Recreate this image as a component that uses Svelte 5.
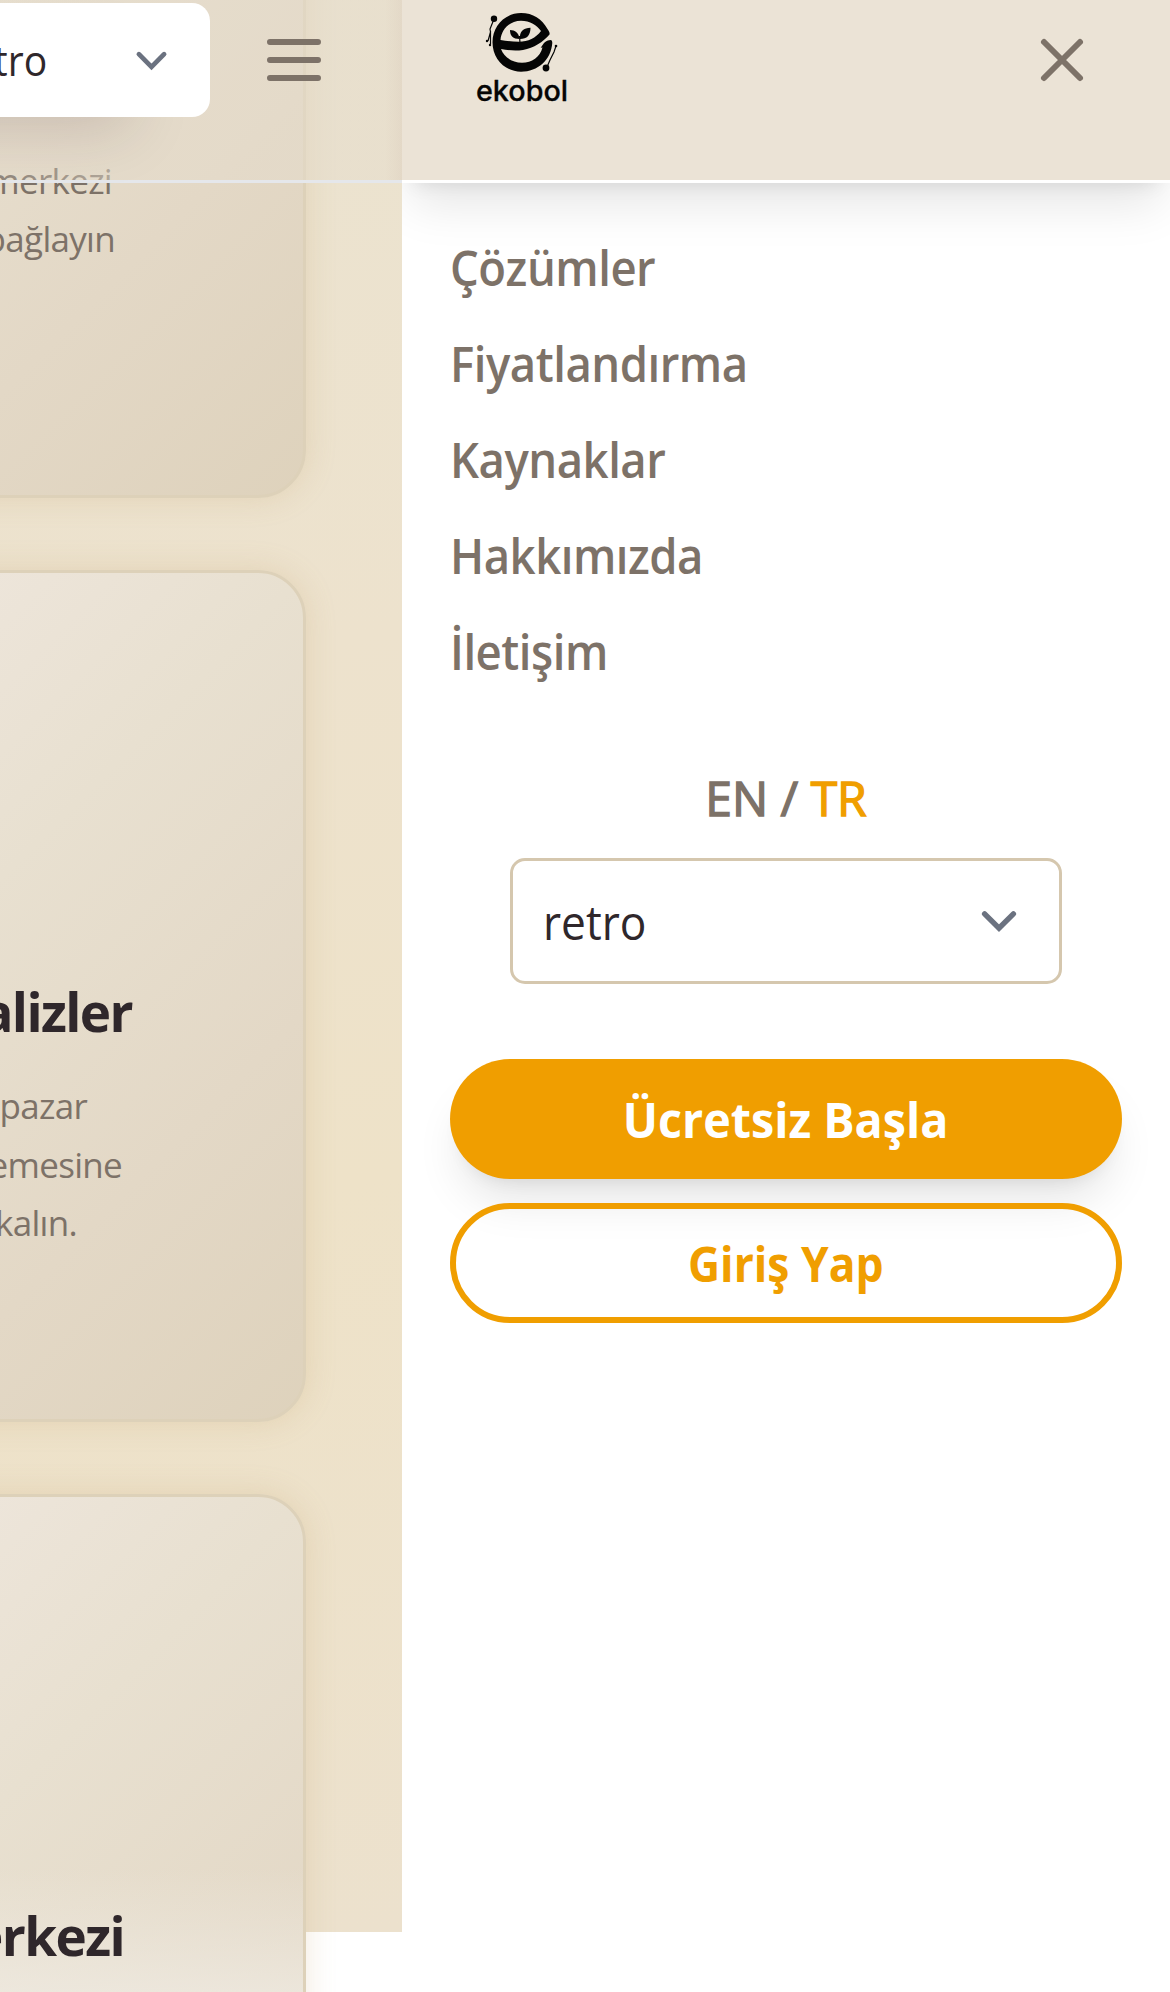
<script>
  const links = ['Çözümler', 'Fiyatlandırma', 'Kaynaklar', 'Hakkımızda', 'İletişim'];

  // inset: distance from the card's right edge to the end of the line
  const cards = [
    { title: '', inset: 174, lines: [{ text: 'merkezi', inset: 194 }, { text: 'bağlayın', inset: 191 }] },
    {
      title: 'Analizler',
      inset: 174,
      lines: [
        { text: 'pazar', inset: 219 },
        { text: 'emesine', inset: 184 },
        { text: 'kalın.', inset: 229 }
      ]
    },
    { title: 'Merkezi', inset: 182, lines: [] }
  ];
</script>

{#snippet chevron()}
  <svg class="chevron" viewBox="0 0 20 20" fill="none" stroke="#6b7280" stroke-width="1.5" stroke-linecap="round">
    <path d="M6 8l4 4 4-4" />
  </svg>
{/snippet}

<div class="screen">
  <main class="page">
    <div class="cards">
      {#each cards as card}
        <article class="card">
          <h3 style:padding-right="{card.inset}px">{card.title}</h3>
          {#each card.lines as line}
            <p style:padding-right="{line.inset}px">{line.text}</p>
          {/each}
        </article>
      {/each}
    </div>
    <header class="topbar">
      <div class="theme"><span>retro</span>{@render chevron()}</div>
      <svg class="icon" viewBox="0 0 24 24" fill="none" stroke="#7d7268" stroke-width="2" stroke-linecap="round">
        <path d="M4 6h16M4 12h16M4 18h16" />
      </svg>
    </header>
  </main>

  <aside class="drawer">
    <header class="drawer-head">
      <svg class="logo" viewBox="0 0 100 110">
        <g fill="none" stroke="#050505" stroke-width="1.2">
          <path d="M20 19L16 29L16.500 32L14 41M16.500 31L16.500 44" />
          <path d="M82 46L80 52L76 60L73 67" />
          <path d="M46 43L45.500 36" />
        </g>
        <g fill="#050505">
          <path
            fill-rule="evenodd"
            d="M75.500 34.500C76 33 75 31 73.500 29C68 19 59 13 47 13C31 13 18.500 26 18.500 42.300C18.500 59 31 71.700 47 71.700C64 71.700 77 60 78.300 43C78.300 41.500 78 40.500 77 40C74 40 72 41 70 43L66.700 47.700L68.500 47.500C66 57 58 62.700 48 62.700C38 62.700 30 57 27 49C34 50.500 42 51 49 50C60 48 69 42 75.500 34.500ZM26.500 40C27.500 29 36 20.700 47 20.700C56 20.700 63 25 67 31C62 38 54 41.700 45 41.700C38 41.700 32 41 26.500 40Z"
          />
          <path d="M45.500 39C39 39 36 36 36 30C41 30 45 33 45.500 39Z" />
          <path d="M46 39C45 31 50 28 56.500 27.700C56.500 35 53 39 46 39Z" />
          <circle cx="20" cy="18.700" r="3.200" />
          <circle cx="72" cy="68" r="3.400" />
          <circle cx="13" cy="41" r="1.200" />
          <circle cx="16" cy="45" r="1.200" />
          <circle cx="82" cy="46" r="1.300" />
        </g>
        <text x="2" y="101" textLength="92" lengthAdjust="spacingAndGlyphs" font-size="28">ekobol</text>
      </svg>
      <svg class="icon" viewBox="0 0 24 24" fill="none" stroke="#7d7268" stroke-width="2" stroke-linecap="round">
        <path d="M6 18L18 6M6 6l12 12" />
      </svg>
    </header>
    <nav>
      {#each links as link}
        <a href="#top">{link}</a>
      {/each}
    </nav>
    <div class="lang">EN / <b>TR</b></div>
    <div class="select"><span>retro</span>{@render chevron()}</div>
    <div class="actions">
      <button class="primary"><span>Ücretsiz Başla</span></button>
      <button class="outline"><span>Giriş Yap</span></button>
    </div>
  </aside>
</div>

<style>
  :global(body) {
    background: #fff;
  }
  .screen {
    display: grid;
    grid-template-columns: 402px 768px;
    height: 1992px;
    overflow: hidden;
    font-family: 'Open Sans', 'Noto Sans', sans-serif;
    color: #7d7268;
  }
  .page {
    position: relative;
    overflow: hidden;
    height: 1992px;
    background: linear-gradient(170deg, #ebe3d0, #ede2cd 35%, #eee2c8 62%, #ece1cd) 0 0 / 100% 1932px no-repeat;
  }
  .cards {
    display: flex;
    flex-direction: column;
    gap: 72px;
    width: 996px;
    margin: -354px 0 0 -690px;
  }
  .card {
    box-sizing: border-box;
    flex: none;
    height: 852px;
    padding-top: 403px;
    border: 3px solid #ddd1b9;
    border-radius: 48px;
    background: linear-gradient(135deg, #f2ede5, #ede5da 37%, #e8e0d0 54%, #e3d8c6 78%, #ded2bc);
    box-shadow: 0 0 30px rgba(190, 155, 95, 0.22);
    text-align: right;
    white-space: nowrap;
  }
  .card:first-child {
    padding-top: 401.5px;
  }
  /* the last card lightens where the section background ends */
  .card:last-child {
    background:
      linear-gradient(transparent 370px, rgba(240, 236, 228, 0.7) 495px),
      linear-gradient(135deg, #f2ede5, #ede5da 37%, #e8e0d0 54%, #e3d8c6 78%, #ded2bc);
  }
  h3 {
    height: 72px;
    margin: 0 -3px 29px 0;
    font-size: 53px;
    font-weight: 700;
    line-height: 72px;
    letter-spacing: -1.6px;
    color: #2f272b;
  }
  p {
    margin: 0 -3px 0 0;
    font-size: 35px;
    line-height: 58.5px;
    letter-spacing: -0.7px;
  }
  .topbar {
    position: absolute;
    inset: 0 0 auto;
    display: flex;
    align-items: flex-start;
    height: 180px;
    border-bottom: 3px solid #e5e7eb;
    background:
      linear-gradient(90deg, transparent 385px, rgba(200, 180, 165, 0.16)),
      linear-gradient(90deg, rgba(229, 220, 204, 0.2), rgba(229, 220, 204, 0.5) 110px);
  }
  .theme {
    box-sizing: border-box;
    display: flex;
    align-items: center;
    justify-content: space-between;
    flex: none;
    width: 330px;
    height: 114px;
    margin: 3px 48px 0 -120px;
    padding: 0 27px 0 69px;
    border-radius: 18px;
    background: #fff;
    box-shadow: -60px 32px 60px -20px rgba(60, 30, 40, 0.17);
    color: #2f272b;
    font-size: 42px;
  }
  .theme span {
    padding-bottom: 1px;
    transform: scaleX(0.93);
    transform-origin: right;
  }
  .theme .chevron {
    width: 63px;
    height: 63px;
  }
  .icon {
    flex: none;
    width: 72px;
    height: 72px;
    margin-top: 24px;
  }
  .drawer {
    background: #fff;
  }
  .drawer-head {
    display: flex;
    justify-content: space-between;
    box-sizing: border-box;
    height: 183px;
    padding: 0 72px;
    border-bottom: 3px solid #fff;
    background: #ebe3d6;
    background-clip: padding-box;
    box-shadow: 0 30px 45px -9px rgba(0, 0, 0, 0.1), 0 12px 18px -12px rgba(0, 0, 0, 0.1);
  }
  .logo {
    width: 100px;
    height: 110px;
  }
  .logo text {
    font-family: Inter, sans-serif;
    font-weight: 500;
    fill: #050505;
    stroke: #050505;
    stroke-width: 0.3px;
  }
  nav {
    display: flex;
    flex-direction: column;
    gap: 24px;
    padding: 49px 48px 0;
  }
  a {
    font-size: 48px;
    font-weight: 600;
    line-height: 72px;
    letter-spacing: -0.5px;
    color: inherit;
    text-decoration: none;
    transform: scaleX(0.947);
    transform-origin: left;
  }
  .lang {
    margin-top: 74px;
    font-size: 48px;
    font-weight: 400;
    line-height: 72px;
    text-align: center;
    -webkit-text-stroke: 1.4px currentColor;
  }
  .lang b {
    font-weight: 400;
    color: #f09e00;
  }
  .select {
    display: flex;
    align-items: center;
    justify-content: space-between;
    box-sizing: border-box;
    width: 552px;
    height: 126px;
    margin: 24px auto 75px;
    padding: 0 24px 0 30px;
    border: 3px solid #d5c7ae;
    border-radius: 15px;
    color: #2f272b;
    font-size: 48px;
  }
  .select span {
    transform: scaleX(0.922);
    transform-origin: left;
  }
  .select .chevron {
    width: 72px;
    height: 72px;
  }
  .actions {
    display: grid;
    gap: 24px;
    padding: 0 48px;
  }
  button {
    box-sizing: border-box;
    height: 120px;
    padding: 0;
    border: 0;
    border-radius: 60px;
    font: 700 48px 'Open Sans', 'Noto Sans', sans-serif;
  }
  button span {
    display: inline-block;
  }
  .primary {
    background: #f09e00;
    color: #fff;
    box-shadow: 0 30px 45px -9px rgba(0, 0, 0, 0.1), 0 12px 18px -12px rgba(0, 0, 0, 0.1);
  }
  .primary span {
    transform: scaleX(0.972);
  }
  .outline {
    border: 6px solid #f09e00;
    background: transparent;
    color: #f09e00;
  }
  .outline span {
    transform: scaleX(0.925);
  }
</style>
